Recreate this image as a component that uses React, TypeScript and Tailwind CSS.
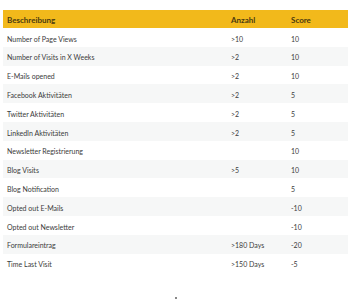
const rows: [string, string, string][] = [
  ['Number of Page Views', '>10', '10'],
  ['Number of Visits in X Weeks', '>2', '10'],
  ['E-Mails opened', '>2', '10'],
  ['Facebook Aktivitäten', '>2', '5'],
  ['Twitter Aktivitäten', '>2', '5'],
  ['LinkedIn Aktivitäten', '>2', '5'],
  ['Newsletter Registrierung', '', '10'],
  ['Blog Visits', '>5', '10'],
  ['Blog Notification', '', '5'],
  ['Opted out E-Mails', '', '-10'],
  ['Opted out Newsletter', '', '-10'],
  ['Formulareintrag', '>180 Days', '-20'],
  ['Time Last Visit', '>150 Days', '-5'],
];

export default function App() {
  return (
    <div className="h-[299px] w-[353px] bg-white pt-[10px] px-[3px] font-['Lato',sans-serif] text-[#3b3b3b]">
      <table className="w-[345px] border-collapse">
        <thead>
          <tr className="h-[18px] bg-[#f2b91b] text-[8px] font-bold text-[#4a3a10]">
            <th className="w-[228px] pl-[4px] pt-[1px] text-left">Beschreibung</th>
            <th className="w-[60px] pt-[1px] text-left">Anzahl</th>
            <th className="pt-[1px] text-left">Score</th>
          </tr>
        </thead>
        <tbody className="text-[7px]">
          {rows.map(([label, count, score], i) => (
            <tr key={label} className={`h-[18.8px] ${i % 2 === 1 ? 'bg-[#f6f7f7]' : 'bg-white'}`}>
              <td className="pl-[4px] pt-[3px]">{label}</td>
              <td className="pt-[3px]">{count}</td>
              <td className="pt-[3px]">{score}</td>
            </tr>
          ))}
        </tbody>
      </table>
      <div className="mt-[25px] flex justify-center">
        <span className="ml-[-2px] h-[2px] w-[2px] bg-[#888]" />
      </div>
    </div>
  );
}
